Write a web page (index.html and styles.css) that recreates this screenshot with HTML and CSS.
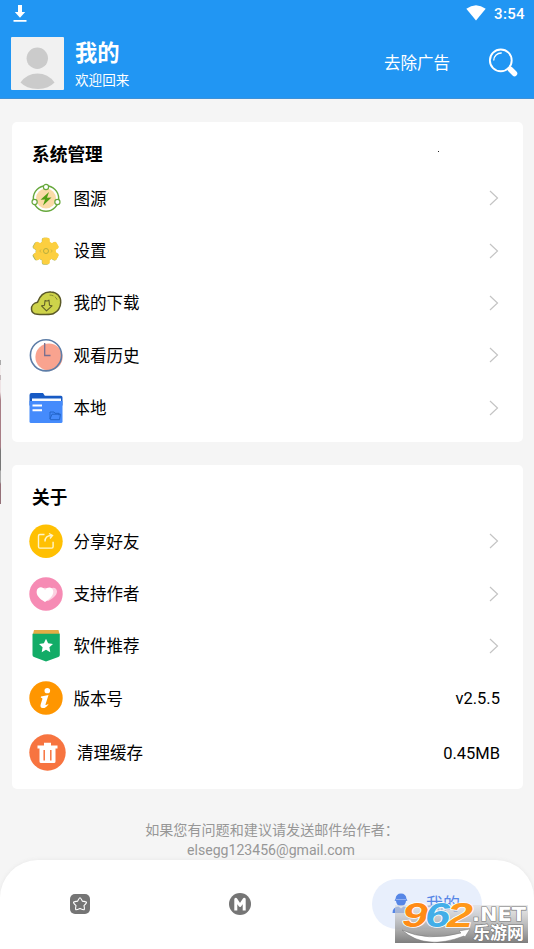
FILE: index.html
```html
<!DOCTYPE html>
<html lang="zh-CN">
<head>
<meta charset="utf-8">
<title>我的</title>
<link rel="stylesheet" href="styles.css">
</head>
<body>
<div class="app">
  <header class="header">
    <div class="status">
      <svg class="download" width="14" height="18" viewBox="0 0 14 18"><path d="M5 0h4v7h3.200L7 12.700 1.800 7H5zM.500 15h13v1.800H.500z" fill="#fff"/></svg>
      <div class="status-right">
        <svg width="20" height="16" viewBox="0 0 20 16"><path d="M.300 3.800Q10-3.300 19.700 3.800L10 15.600z" fill="#fff"/></svg>
        <span>3:54</span>
      </div>
    </div>
    <div class="profile">
      <svg class="avatar" width="53" height="53" viewBox="0 0 53 53"><path fill="#f1f1f1" d="M0 0h53v53H0z"/><circle cx="26.300" cy="21.200" r="10.700" fill="#cbcbcb"/><path d="M9.500 45.500Q16 36.600 26.500 36.600T43.500 45.500Q38 51.500 27 52 15 51.500 9.500 45.500z" fill="#cbcbcb"/></svg>
      <div class="who"><h1>我的</h1><p>欢迎回来</p></div>
      <span class="noads">去除广告</span>
      <svg class="search" width="30" height="30" viewBox="0 0 30 30" fill="none" stroke="#fff"><circle cx="12.800" cy="12.400" r="10.900" stroke-width="1.900"/><path d="M5.700 12.500a7.500 7.500 0 0 1 8-7.500" stroke-width="1.300"/><path d="M19.800 19.500l2 2" stroke-width="2"/><path d="M22.500 21.500l4 4" stroke-width="5.500" stroke-linecap="round"/></svg>
    </div>
  </header>

  <main class="content">
    <section class="card first">
      <h2>系统管理</h2>
      <span class="speck"></span>
      <div class="row">
        <svg class="icon" viewBox="0 0 34 34"><circle cx="17" cy="17.500" r="10" fill="#fbdba7"/><circle cx="17" cy="17.500" r="12.700" fill="none" stroke="#67a83c" stroke-width="1.400"/><g fill="#fff" stroke="#67a83c" stroke-width="1.200"><circle cx="17" cy="6" r="2.600"/><circle cx="5.600" cy="21" r="2.600"/><circle cx="28.400" cy="21" r="2.600"/></g><path d="M20 11l-8.500 7.700 4.500-.100-2 5.900 8.500-8-4.500.200z" fill="#529d13"/></svg>
        <span>图源</span><svg class="chev" viewBox="0 0 10 16"><path d="M1 1l7.500 7L1 15"/></svg>
      </div>
      <div class="row">
        <svg class="icon" viewBox="0 0 34 34"><g fill="#a5b565"><circle cx="16.300" cy="17.300" r="9.700"/><rect x="12.800" y="3.700" width="7" height="27" rx="2"/><rect x="12.800" y="3.700" width="7" height="27" rx="2" transform="rotate(60 16.300 17.300)"/><rect x="12.800" y="3.700" width="7" height="27" rx="2" transform="rotate(120 16.300 17.300)"/></g><g fill="#fccf40"><circle cx="17" cy="17" r="10"/><rect x="13.200" y="3.700" width="7.600" height="26.500" rx="2"/><rect x="13.200" y="3.700" width="7.600" height="26.500" rx="2" transform="rotate(60 17 17)"/><rect x="13.200" y="3.700" width="7.600" height="26.500" rx="2" transform="rotate(120 17 17)"/></g><circle cx="17" cy="17" r="2.500" fill="none" stroke="#b6ae3e"/><path d="M12 15.500l-1.200 1.500 1.200 1.500M22 15.500l1.200 1.500-1.200 1.500" fill="none" stroke="#c9b13f" stroke-width=".8"/></svg>
        <span>设置</span><svg class="chev" viewBox="0 0 10 16"><path d="M1 1l7.500 7L1 15"/></svg>
      </div>
      <div class="row">
        <svg class="icon" viewBox="0 0 34 34"><path d="M2.500 23.500c-.500-4 2.500-6.500 6-7.200C11 9 16 5.500 22 6c6 .300 10 4.500 9.700 10.500-.200 5-2.700 9-7.500 11.200-2 .900-12 1-16 .600-3.500-.400-5.500-1.800-5.700-4.800z" fill="#ced34a" stroke="#5b5928" stroke-width="1.500"/><path d="M20.500 9c4 .200 7.200 2 8 6" fill="none" stroke="#878c35" stroke-width="1" stroke-dasharray="4 1.500"/><path d="M16 14.500c1.500.800 3 .600 4-.300l.500 5 2.500.700-5.500 5-5-5 3-.700z" fill="none" stroke="#615f29" stroke-width="1.100" stroke-linejoin="round"/></svg>
        <span>我的下载</span><svg class="chev" viewBox="0 0 10 16"><path d="M1 1l7.500 7L1 15"/></svg>
      </div>
      <div class="row">
        <svg class="icon" viewBox="0 0 34 34"><circle cx="20" cy="19" r="13.600" fill="#f9a38f"/><circle cx="17" cy="17.300" r="15.600" fill="none" stroke="#5d7da7" stroke-width="1.600"/><path d="M15.700 5v12.500h5.800" fill="none" stroke="#776f91" stroke-width="1.300"/></svg>
        <span>观看历史</span><svg class="chev" viewBox="0 0 10 16"><path d="M1 1l7.500 7L1 15"/></svg>
      </div>
      <div class="row">
        <svg class="icon" viewBox="0 0 34 34"><path d="M.500 4q0-2 2-2H14l1.800 2.700H32q1.500 0 1.500 1.800v8H.500z" fill="#175ac4"/><path d="M3 7.500h29v4H3z" fill="#f5faff"/><path d="M.500 10h33V30.500q0 1.500-1.500 1.500H2q-1.500 0-1.500-1.500z" fill="#458bfc"/><path d="M3.500 14.500h9.500M3.500 19.300h9.500" stroke="#fff" stroke-width="1.900"/><path d="M21 28v-7h4l1 1.300h4v2M21 28l2-4.800h8.500l-1 5.500h-9z" fill="none" stroke="#2365c9"/></svg>
        <span>本地</span><svg class="chev" viewBox="0 0 10 16"><path d="M1 1l7.500 7L1 15"/></svg>
      </div>
    </section>

    <section class="card second">
      <h2>关于</h2>
      <div class="row">
        <svg class="icon" viewBox="0 0 34 34"><circle cx="17" cy="17.300" r="16.700" fill="#ffc002"/><path d="M15.500 10.500h-4.700q-1.300 0-1.300 1.300v11q0 1.300 1.300 1.300h12q1.300 0 1.300-1.300v-5M16 17.500c0-4 2.500-6 6.500-6M20 9.500l3.500 2-2.500 3" fill="none" stroke="#fff5cd" stroke-width="1.400"/></svg>
        <span>分享好友</span><svg class="chev" viewBox="0 0 10 16"><path d="M1 1l7.500 7L1 15"/></svg>
      </div>
      <div class="row">
        <svg class="icon" viewBox="0 0 34 34"><circle cx="17" cy="17" r="16.700" fill="#f68bb4"/><path d="M19 24c-5-3-8-6-7-10 1-4 6-4 8-1 3-4 8-2.500 8 1.500 0 4-5 7.500-9 9.500z" fill="#fcd1e1"/><path d="M16 25c-5-3-9-6.500-8.300-11 .700-4.500 6.300-5 8.300-1 2.500-4 8-3 8.300 1.200.300 4.500-4.300 8.300-8.300 10.800z" fill="#fff"/></svg>
        <span>支持作者</span><svg class="chev" viewBox="0 0 10 16"><path d="M1 1l7.500 7L1 15"/></svg>
      </div>
      <div class="row">
        <svg class="icon" viewBox="0 0 34 34"><path d="M5 1h24.500l1 4H4z" fill="#e4ad45"/><path d="M3.500 4.700h27.300V26q0 1.500-1.500 2L17 32.500 5 28q-1.500-.500-1.500-2z" fill="#12ac67"/><path d="M17 9.800l2.100 4.500 4.900.600-3.600 3.400.9 4.900-4.300-2.400-4.300 2.400.9-4.900-3.600-3.400 4.900-.6z" fill="#fff"/></svg>
        <span>软件推荐</span><svg class="chev" viewBox="0 0 10 16"><path d="M1 1l7.500 7L1 15"/></svg>
      </div>
      <div class="row">
        <svg class="icon" viewBox="0 0 34 34"><circle cx="17" cy="17" r="16.700" fill="#ff9600"/><ellipse cx="18.300" cy="9.700" rx="2.800" ry="2.600" fill="#fff"/><path d="M12 15.500q4-.800 7.500-1.500l-3 9.500q-.300 1.500 3.200-.8-2.500 4.500-6 4.400-3-.300-2-3.800l1.700-5.300q.2-1.300-1.600-1.300z" fill="#fff"/></svg>
        <span>版本号</span><b class="value">v2.5.5</b>
      </div>
      <div class="row cache">
        <svg class="icon large" viewBox="0 0 37 37"><circle cx="18.500" cy="18.500" r="18.200" fill="#f77440"/><path d="M8.500 11.500h20v3h-20zM15 8.800h7v3h-7zM10.500 14h16v13.500q0 1.500-1.500 1.500H12q-1.500 0-1.500-1.500z" fill="#fff"/><path d="M15.200 16v10.500M21.800 16v10.500" stroke="#f77440" stroke-width="1.500"/></svg>
        <span>清理缓存</span><b class="value">0.45MB</b>
      </div>
    </section>

    <footer class="contact"><p>如果您有问题和建议请发送邮件给作者：</p><p class="mail">elsegg123456@gmail.com</p></footer>
  </main>

  <nav class="tabs">
    <div class="tab"><svg width="20" height="20" viewBox="0 0 20 20"><rect width="20" height="20" rx="5" fill="#757575"/><path d="M10 3.800q.700 0 2.300 3.300 4 .5 4.200 1.200.2.600-2.500 3.300.8 3.700.1 4.200-.6.300-4.100-1.300-3.500 1.600-4.100 1.300-.7-.5.100-4.200-2.700-2.700-2.500-3.300.2-.7 4.200-1.200Q9.300 3.800 10 3.800z" fill="none" stroke="#fff" stroke-width="1.100"/></svg></div>
    <div class="tab"><svg width="22" height="22" viewBox="0 0 22 22"><circle cx="11" cy="11" r="11" fill="#757575"/><path d="M6.800 17.400V6.300l4.200 6.200 4.200-6.200v11.100" fill="none" stroke="#fff" stroke-width="3" stroke-linejoin="round"/></svg></div>
    <div class="tab active"><div class="pill"><svg width="18" height="21" viewBox="0 0 18 21"><path d="M3.500 6Q4 .500 9 .500T14.500 6l1 1.500-1.500.500Q13.500 13 9 13T4 8L2.500 7.500zM.500 20q0-6 6-6.500L9 15.500l2.500-2q6 .500 6 6.500z" fill="#5686e6"/><path d="M4 6.500h10" stroke="#a9c1f5" stroke-width=".7"/></svg><span>我的</span></div></div>
  </nav>
  <div class="edge"></div>
  <div class="watermark">
    <svg width="139" height="59" viewBox="0 -10 139 59">
      <defs><linearGradient id="shade" x2="0" y2="1"><stop stop-color="#ddd" stop-opacity=".6"/><stop offset="1" stop-color="#777" stop-opacity=".95"/></linearGradient></defs>
      <path d="M0 5h133v38H0z" fill="url(#shade)"/>
      <g class="digits"><text x="7" y="27" textLength="26" lengthAdjust="spacingAndGlyphs" fill="#ff8b16">9</text><text x="30" y="27" textLength="25" lengthAdjust="spacingAndGlyphs" fill="#43aee8">6</text><text x="52" y="27" textLength="26" lengthAdjust="spacingAndGlyphs" fill="#ff9819">2</text></g>
      <path d="M7 30Q32 42 66 33l-2-2 11-2-5 8-1-1Q30 51 7 30z" fill="#fff" stroke="#777" stroke-width=".5"/>
      <text class="net" x="77" y="21" textLength="54" lengthAdjust="spacingAndGlyphs">.NET</text>
      <text class="site" x="78" y="39" textLength="51">乐游网</text>
    </svg>
  </div>
</div>
</body>
</html>
```
FILE: styles.css
```css
* { box-sizing: border-box; }
body, h1, h2, p { margin: 0; }
body { background: #fff; color: #111; font: 16.5px/24px Roboto, "Noto Sans CJK SC", sans-serif; }
.app { position: relative; width: 534px; height: 949px; overflow: hidden; display: flex; flex-direction: column; background: #f5f5f5; }
.header { height: 99px; flex: none; background: #2196f3; color: #fff; border-bottom: 1px solid #3d91d8; }
.status { height: 37px; display: flex; justify-content: space-between; align-items: flex-start; padding: 5px 9px 0 13px; }
.status-right { display: flex; gap: 8px; align-items: flex-start; font-size: 15px; font-weight: 500; line-height: 18px; letter-spacing: .35px; }
.profile { display: flex; height: 53px; padding-left: 11px; }
.avatar { flex: none; border-radius: 1px; }
.who { width: 100px; margin-left: 11px; }
h1 { font-size: 22.3px; line-height: 33px; font-weight: 700; }
.who p { font-size: 13.6px; line-height: 20px; }
.noads { margin-left: 209px; line-height: 54px; }
.search { margin: 11px 0 0 38px; }
.content { flex: 1; padding: 23px 11px 0 12px; }
.card { background: #fff; border-radius: 5px; padding: 21px 24px 0 17px; position: relative; }
.first { height: 320px; }
.second { height: 324px; margin-top: 23px; }
h2 { font-size: 17.7px; line-height: 24px; font-weight: 700; padding-left: 3px; margin-bottom: 5px; color: #000; }
.row { height: 52.4px; display: flex; align-items: center; color: #000; }
.row span { padding-top: 3px; }
.icon { width: 34px; height: 34px; margin-right: 10.5px; flex: none; }
.icon.large { width: 37px; height: 37px; margin-right: 11px; }
.chev { width: 10px; height: 16px; margin-left: auto; fill: none; stroke: #c4c4c4; stroke-width: 1.2; }
.value { font-weight: 400; margin: 2px -1px 0 auto; }
.cache { height: 56px; }
.speck { position: absolute; left: 426px; top: 29px; width: 1px; height: 1px; background: #222; }
.contact { margin-top: 31px; text-align: center; color: #979797; font-size: 14.1px; line-height: 20px; padding-left: 9px; }
.contact .mail { margin-right: 2px; }
.tabs { height: 89px; flex: none; display: grid; grid-template-columns: 160px 160px 214px; background: #fff; border-radius: 38px 38px 0 0; box-shadow: 0 0 4px #e7e7e7; }
.tab { height: 87px; display: flex; align-items: center; justify-content: center; }
.pill { width: 110px; height: 50px; border-radius: 25px; background: #e8effc; display: flex; align-items: center; gap: 16px; padding-left: 20px; color: #5686e6; font-size: 17px; }
.edge { position: absolute; left: 0; top: 360px; width: 1px; height: 144px; background: linear-gradient(#aaa 0 5px, #f2eded 5px 15px, #c4b8bb 15px 20px, #eee2e4 20px 32px, #a77d85 40px 87px, #777 90px 110px, #aaa 111px 122px, #947078 124px); }
.watermark { position: absolute; left: 395px; top: 890px; height: 59px; }
.digits { font: italic 900 35px "Liberation Sans", sans-serif; stroke: #fff; stroke-width: 1.5px; paint-order: stroke; }
.net { font: 700 20px "DejaVu Sans", sans-serif; fill: #fff; stroke: #777; stroke-width: 1.2px; paint-order: stroke; }
.site { font: 700 17px "Noto Sans CJK SC", sans-serif; fill: #fff; stroke: #777; stroke-width: 1.2px; paint-order: stroke; }
```
